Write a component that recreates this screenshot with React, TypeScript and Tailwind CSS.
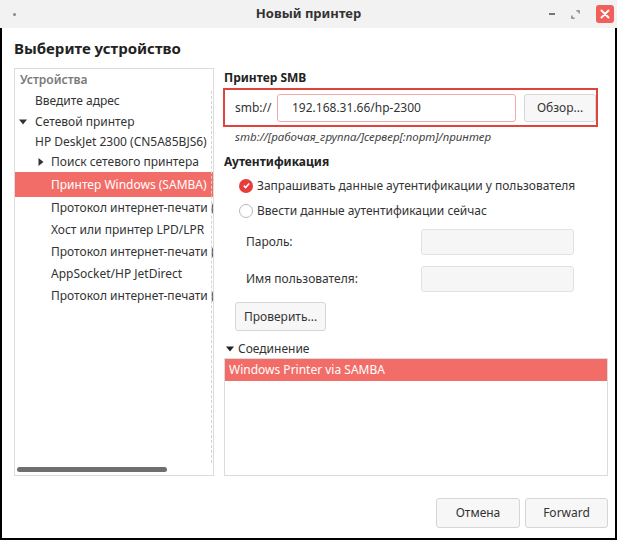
import { useState } from 'react';

const font = { fontFamily: '"Noto Sans", "Open Sans", sans-serif' };

type Row = { label: string; indent: number; h: string; arrow?: 'down' | 'right'; selected?: boolean };

const rows: Row[] = [
  { label: 'Введите адрес', indent: 20, h: 'h-[20px]' },
  { label: 'Сетевой принтер', indent: 20, h: 'h-[21px]', arrow: 'down' },
  { label: 'HP DeskJet 2300 (CN5A85BJS6)', indent: 20, h: 'h-[20px]' },
  { label: 'Поиск сетевого принтера', indent: 36, h: 'h-[20px]', arrow: 'right' },
  { label: 'Принтер Windows (SAMBA)', indent: 36, h: 'h-[25px]', selected: true },
  { label: 'Протокол интернет-печати (IPP)', indent: 36, h: 'h-[22px]' },
  { label: 'Хост или принтер LPD/LPR', indent: 36, h: 'h-[22px]' },
  { label: 'Протокол интернет-печати (HTTPS)', indent: 36, h: 'h-[22px]' },
  { label: 'AppSocket/HP JetDirect', indent: 36, h: 'h-[22px]' },
  { label: 'Протокол интернет-печати (IPPS)', indent: 36, h: 'h-[22px]' },
];

function TitleBar() {
  return (
    <div className="h-[28px] shrink-0 bg-[#f2f2f2] flex items-center pl-[13px] pr-[3px] relative">
      <span className="w-[3px] h-[3px] bg-[#888] rounded-full" />
      <div className="absolute left-0 right-0 text-center text-[13px] font-bold text-[#333] pointer-events-none">
        Новый принтер
      </div>
      <div className="ml-auto flex items-center">
        <span className="w-[6px] h-[1.5px] bg-[#777]" />
        <svg width="9" height="9" viewBox="0 0 10 10" className="text-[#777] ml-[16px]">
          <path d="M6 1h3v3M4 9H1V6" fill="none" stroke="currentColor" strokeWidth="1.4" />
        </svg>
        <span className="w-[18px] h-[18px] rounded-[3px] bg-[#f25e59] flex items-center justify-center ml-[16px]">
          <svg width="10" height="10" viewBox="0 0 10 10">
            <path d="M1.5 1.5l7 7M8.5 1.5l-7 7" stroke="white" strokeWidth="2" strokeLinecap="round" />
          </svg>
        </span>
      </div>
    </div>
  );
}

function DeviceTree() {
  return (
    <div className="w-[200px] shrink-0 border border-[#dcdcdc] flex flex-col bg-white overflow-hidden">
      <div className="h-[22px] flex items-center px-[5px] text-[12px] font-semibold text-[#7a7a7a]">Устройства</div>
      <div className="flex-1 relative">
        <div className="absolute top-0 bottom-0 right-[1px] border-r border-dashed border-[#d4d4d4]" />
        {rows.map((r) => (
          <div
            key={r.label}
            className={`flex items-center whitespace-nowrap text-[12px] ${r.h} ${
              r.selected ? 'bg-[#f26d68] text-white' : 'text-[#333]'
            }`}
            style={{ paddingLeft: r.indent }}
          >
            {r.arrow === 'down' && (
              <svg width="8" height="8" viewBox="0 0 8 8" className="mr-[8px] -ml-[16px]">
                <path d="M0 1.5h8L4 6.5z" fill="#333" />
              </svg>
            )}
            {r.arrow === 'right' && (
              <svg width="8" height="8" viewBox="0 0 8 8" className="mr-[6px] -ml-[14px]">
                <path d="M1.5 0v8L6.5 4z" fill="#333" />
              </svg>
            )}
            {r.label}
          </div>
        ))}
      </div>
      <div className="h-[12px] flex items-center px-[2px]">
        <div className="w-[150px] h-[5px] rounded-full bg-[#6f6f6f]" />
      </div>
    </div>
  );
}

function Radio({ checked, label }: { checked: boolean; label: string }) {
  return (
    <div className="flex items-center h-[25px] pl-[15px] text-[12px] text-[#333]">
      {checked ? (
        <span className="w-[14px] h-[14px] rounded-full bg-[#ea3b3b] flex items-center justify-center mr-[4px]">
          <svg width="9" height="9" viewBox="0 0 10 10">
            <path d="M2 5.2l2 2 4-4.4" fill="none" stroke="white" strokeWidth="1.8" />
          </svg>
        </span>
      ) : (
        <span className="w-[14px] h-[14px] rounded-full border border-[#b8b8b8] bg-white mr-[4px]" />
      )}
      {label}
    </div>
  );
}

function Field({ label }: { label: string }) {
  return (
    <div className="flex items-center h-[37px] pl-[22px] text-[12px] text-[#333]">
      <span className="w-[175px] shrink-0">{label}</span>
      <div className="w-[153px] h-[26px] rounded-[3px] border border-[#e2e2e2] bg-[#f6f6f6]" />
    </div>
  );
}

export default function App() {
  const [addr] = useState('192.168.31.66/hp-2300');
  return (
    <div className="w-[617px] h-[540px] flex flex-col bg-white" style={font}>
      <TitleBar />
      <div className="flex-1 flex flex-col border-x-2 border-b-2 border-black pl-[12px] pr-[7px]">
        <div className="h-[40px] flex items-center text-[15px] font-bold text-[#222]">Выберите устройство</div>
        <div className="flex gap-[10px] h-[408px]">
          <DeviceTree />
          <div className="flex-1 flex flex-col">
            <div className="h-[20px] flex items-center text-[12px] font-bold text-[#222]">Принтер SMB</div>
            <div className="h-[39px] -ml-[1px] mr-[10px] border-2 border-[#e0433c] flex items-center pl-[10px] pr-0 gap-[8px]">
              <span className="text-[12px] text-[#333] w-[34px]">smb://</span>
              <div className="flex-1 h-[28px] rounded-[3px] border border-[#f2aaa8] flex items-center pl-[14px] text-[12px] text-[#333]">
                {addr}
              </div>
              <button className="w-[72px] h-[28px] rounded-[3px] border border-[#d6d6d6] bg-[#f7f7f7] text-[12px] text-[#333]">
                Обзор...
              </button>
            </div>
            <div className="h-[20px] flex items-center pl-[11px] text-[11.5px] italic text-[#444]">
              smb://[рабочая_группа/]сервер[:порт]/принтер
            </div>
            <div className="h-[26px] flex items-end pb-[2px] text-[12px] font-bold text-[#222]">Аутентификация</div>
            <Radio checked label="Запрашивать данные аутентификации у пользователя" />
            <Radio checked={false} label="Ввести данные аутентификации сейчас" />
            <Field label="Пароль:" />
            <Field label="Имя пользователя:" />
            <div className="pl-[11px] pt-[5px]">
              <button className="h-[29px] px-[8px] rounded-[3px] border border-[#d6d6d6] bg-[#f7f7f7] text-[12px] text-[#333]">
                Проверить...
              </button>
            </div>
            <div className="h-[27px] flex items-end text-[12px] text-[#333]">
              <svg width="8" height="8" viewBox="0 0 8 8" className="mr-[4px] mb-[5px] ml-[2px]">
                <path d="M0 1.5h8L4 6.5z" fill="#222" />
              </svg>
              Соединение
            </div>
            <div className="flex-1 border border-[#dcdcdc]">
              <div className="h-[22px] bg-[#f26d68] text-white text-[12px] flex items-center pl-[4px]">
                Windows Printer via SAMBA
              </div>
            </div>
          </div>
        </div>
        <div className="flex-1 flex items-start justify-end gap-[5px] pt-[22px]">
          <button className="w-[84px] h-[30px] rounded-[3px] border border-[#d6d6d6] bg-[#f7f7f7] text-[12px] text-[#333]">
            Отмена
          </button>
          <button className="w-[83px] h-[30px] rounded-[3px] border border-[#d6d6d6] bg-[#f7f7f7] text-[12px] text-[#333]">
            Forward
          </button>
        </div>
      </div>
    </div>
  );
}
